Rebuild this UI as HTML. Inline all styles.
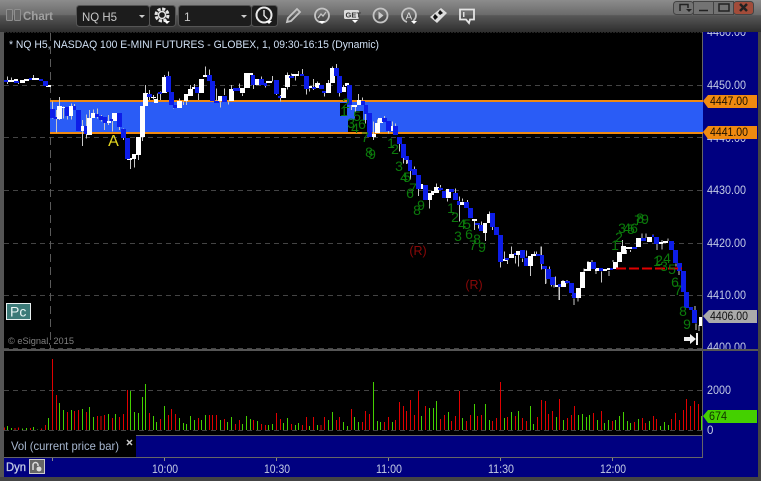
<!DOCTYPE html>
<html><head><meta charset="utf-8"><style>
html,body{margin:0;padding:0;background:#444;width:761px;height:481px;overflow:hidden}
svg{display:block;font-family:"Liberation Sans",sans-serif}
</style></head><body>
<svg width="761" height="481" viewBox="0 0 761 481" xmlns="http://www.w3.org/2000/svg">
<defs><linearGradient id="t" x1="0" y1="0" x2="0" y2="1"><stop offset="0" stop-color="#8c8c8c"/><stop offset=".47" stop-color="#6a6a6a"/><stop offset=".48" stop-color="#585858"/><stop offset="1" stop-color="#2e2e2e"/></linearGradient>
<clipPath id="c"><rect x="703" y="32" width="55" height="317"/></clipPath></defs>
<rect width="761" height="481" fill="#444"/>
<rect width="761" height="32" fill="url(#t)"/>
<rect x="0" y="32" width="4" height="449" fill="#555"/>
<rect x="758" y="32" width="3" height="449" fill="#444"/>
<!-- toolbar -->
<g fill="#666" stroke="#8e8e8e" stroke-width="1"><rect x="6.5" y="9.5" width="6" height="11" rx="1"/><rect x="14.5" y="9.5" width="6" height="11" rx="1"/></g>
<text x="23" y="20" font-size="11.500" font-weight="bold" fill="#a0a0a0" textLength="30" lengthAdjust="spacingAndGlyphs">Chart</text>
<rect x="76.5" y="5.5" width="73" height="21" rx="3" fill="#1c1c1c" stroke="#555"/>
<rect x="149.5" y="5.5" width="26" height="21" rx="3" fill="#1c1c1c" stroke="#555"/>
<text x="82" y="21" font-size="12" fill="#c8c8c8" textLength="35" lengthAdjust="spacingAndGlyphs">NQ H5</text>
<path d="M139 15h6l-3 3z" fill="#ccc"/>
<circle cx="162" cy="15" r="6" fill="none" stroke="#e4e4e4" stroke-width="3" stroke-dasharray="3.200 1.500"/><circle cx="162" cy="15" r="3.500" fill="none" stroke="#e4e4e4" stroke-width="1.500"/>
<path d="M164 21h6l-3 3z" fill="#fff"/>
<rect x="178.5" y="5.5" width="73" height="21" rx="3" fill="#1c1c1c" stroke="#555"/>
<rect x="251.5" y="5.5" width="26" height="21" rx="3" fill="#1c1c1c" stroke="#555"/>
<text x="184" y="21" font-size="12" fill="#c8c8c8">1</text>
<path d="M241 15h6l-3 3z" fill="#ccc"/>
<circle cx="264" cy="15" r="7.500" fill="none" stroke="#e8e8e8" stroke-width="2"/><path d="M264 10v5.500l3.500 3.500" fill="none" stroke="#e8e8e8" stroke-width="1.400"/>
<path d="M266 21h6l-3 3z" fill="#fff"/>
<g fill="none" stroke="#c4c4c4" stroke-width="1.800">
<path d="M287 22l1-4 9-9 3 3-9 9z"/>
<circle cx="322" cy="15.500" r="7"/><path d="M318 18l3-4 2 2 3-4" stroke-width="1.300"/>
<circle cx="380.500" cy="15.500" r="7"/>
<path d="M413 21a7 7 0 1 0-6 1"/>
<path d="M460 9.500h14v10h-4l-1 3.500-3-3.500h-6z" stroke="#e4e4e4"/>
</g>
<path d="M319 21h6l-3 3zM352 20h6l-3 3zM411 21h6l-3 3z" fill="#fff"/>
<rect x="344" y="10" width="15" height="9" rx="1.500" fill="#ddd"/>
<text x="345.500" y="17.500" font-size="7.500" font-weight="bold" fill="#333">GET</text>
<path d="M378.500 11.500v8l5-4z" fill="#ccc"/>
<text x="405.500" y="19.500" font-size="10" fill="#ddd">A</text>
<path d="M430 17l11-9 6 5-10 10z" fill="#ddd"/>
<path d="M435 14l3 3-3 3-2-3zM440 10l3 3-3 2-2-2z" fill="#111"/>
<rect x="463" y="12" width="1.500" height="5" fill="#ddd"/>
<!-- window buttons -->
<g fill="none" stroke="#444"><rect x="673.500" y="1.500" width="20" height="13" rx="3" fill="#737373"/><rect x="693.500" y="1.500" width="20" height="13" fill="#737373"/><rect x="713.500" y="1.500" width="20" height="13" fill="#737373"/><rect x="733.500" y="1.500" width="20" height="13" rx="3" fill="#a24c3a"/></g>
<path d="M680 11V4.500h8V8M699 10.500h9M719 4h10v7h-10z" fill="none" stroke="#222" stroke-width="1.500"/>
<path d="M686 9h6l-3 3z" fill="#222"/>
<path d="M740 4l7 7M747 4l-7 7" stroke="#222" stroke-width="2.500"/>
<!-- panels -->
<rect x="4" y="32" width="698" height="318" fill="#000"/>
<path d="M4 32.500h754" stroke="#222" stroke-dasharray="2 1"/>
<rect x="703" y="32" width="55" height="445" fill="#000080"/>
<rect x="702" y="32" width="1" height="425" fill="#666"/>
<rect x="4" y="351" width="698" height="84" fill="#000"/>
<rect x="4" y="435" width="132" height="22" fill="#000"/>
<rect x="136" y="435" width="566" height="22" fill="#000080"/>
<rect x="136" y="435" width="566" height="1" fill="#666"/>
<rect x="4" y="457" width="699" height="20" fill="#000080"/>
<rect x="4" y="457" width="699" height="1" fill="#666"/>
<rect x="0" y="477" width="761" height="4" fill="#444"/>
<!-- grid -->
<g stroke="#444" stroke-dasharray="5 4" shape-rendering="crispEdges">
<path d="M4 85.500h698M4 137.500h698M4 190.500h698M4 243.500h698M4 295.500h698M4 348.500h698M4 390.500h698M4 430.500h698"/>
</g>
<path d="M50.500 33V349" stroke="#5a5a5a" stroke-dasharray="8 5" shape-rendering="crispEdges"/>
<!-- band -->
<rect x="50" y="101" width="653" height="32" fill="#2a5cf6"/>
<rect x="50" y="100" width="653" height="2" fill="#f08a10"/>
<rect x="50" y="132" width="653" height="2" fill="#f08a10"/>
<path d="M340 103h7v13h-7zM355 111h8v9h-8zM348 120h19v12h-19z" fill="#000"/>
<!-- wicks -->
<g shape-rendering="crispEdges" stroke="#c8c8c8" stroke-width="3" fill="none">
<path transform="translate(0,60) scale(.3333)" d="M157 125V175M169 150V218M178 111V180M190 140V175M202 168V178M214 130V178M223 132V150M247 180V258M259 163V236M268 150V175M280 148V165M292 145V175M304 165V185M313 180V210M325 165V195M337 175V215M358 200V210M370 205V240M391 295V327M403 295V323M415 285V300M427 230V243M436 75V100M448 90V120M460 105V118M472 100V120M481 95V120M493 45V60M505 35V50M520 130V145M538 115V125M550 125V135M559 120V135M571 75V95M583 72V85M595 100V120M616 20V45M628 28V45M649 85V122M661 125V143M673 85V105M685 125V133M694 75V90M718 70V85M727 100V108M22 50V72M34 52V62M55 66V72M100 45V55"/>
<path transform="translate(250,60) scale(.3333)" d="M10 70V87M34 50V60M46 70V82M67 48V65M79 100V105M91 105V125M112 38V50M112 78V88M124 40V46M136 45V62M145 33V48M157 27V42M169 85V103M178 85V95M190 57V90M202 65V72M223 95V110M235 60V70M247 20V25M259 12V25M268 95V110M280 75V84M292 70V76M304 135V150M316 135V155M325 102V120M337 113V122M346 160V190M370 185V240M382 178V190M403 168V175M415 210V220M427 185V198M436 190V198M448 250V275M460 295V310M469 290V312M481 330V358M493 320V330"/>
<path transform="translate(360,130) scale(.3333)" d="M118 40V65M130 80V100M142 90V100M151 120V148M175 175V198M208 208V235M229 160V172M241 165V172M262 205V215M286 175V190M298 200V275M307 205V215M322 210V218M343 270V300M355 285V295M364 275V285M376 305V333M388 245V255M397 290V300M421 395V412M433 365V388M442 390V402M454 350V372M466 378V400M475 375V410M487 385V396M499 362V380M511 408V438M523 365V378M529 365V375M544 350V375M544 400V418M556 415V462M568 410V418M574 450V470M586 440V465M598 470V510"/>
<path transform="translate(540,200) scale(.3333)" d="M3 140V165M18 235V250M42 255V262M57 260V300M69 240V245M81 240V250M102 295V315M114 290V305M132 205V218M144 183V190M156 180V186M168 210V222M184 215V248M207 213V228M219 180V186M247 120V140M259 150V162M271 150V156M306 100V115M318 100V114M339 103V110M351 132V150M366 120V148M384 115V123M408 190V200M417 210V225M465 318V330M468 370V390M477 375V393"/>
</g>
<!-- white bodies -->
<path shape-rendering="crispEdges" fill="#fff" d="M8 80h6v2h-6zM14 79h4v2h-4zM20 80h5v3h-5zM24 79h5v2h-5zM32 78h7v2h-7zM46 85h5v2h-5zM57 106h5v13h-5zM62 107h3v1h-3zM69 106h4v10h-4zM80 126h4v5h-4zM87 118h5v17h-5zM91 113h4v5h-4zM106 121h5v2h-5zM112 113h5v8h-5zM127 158h5v2h-5zM132 154h4v5h-4zM136 137h5v18h-5zM140 106h5v31h-5zM143 93h5v13h-5zM151 97h5v1h-5zM154 99h4v4h-4zM162 77h5v16h-5zM177 101h5v7h-5zM184 94h4v7h-4zM188 89h5v7h-5zM192 87h4v2h-4zM199 79h5v14h-5zM203 75h5v2h-5zM218 96h4v5h-4zM229 89h5v12h-5zM240 88h5v5h-5zM244 73h6v15h-6zM250 73h3v2h-3zM255 79h5v6h-5zM266 81h6v2h-6zM281 88h5v10h-5zM285 75h5v12h-5zM292 74h7v2h-7zM307 86h5v2h-5zM315 83h5v5h-5zM326 83h5v10h-5zM330 68h5v15h-5zM341 87h5v5h-5zM345 83h4v3h-4zM352 105h5v2h-5zM357 100h4v5h-4zM371 134h5v3h-5zM375 123h5v10h-5zM378 118h5v5h-5zM390 126h4v5h-4zM418 184h5v5h-5zM427 193h5v7h-5zM431 191h3v4h-3zM434 187h5v6h-5zM446 189h5v9h-5zM460 202h4v3h-4zM472 219h5v2h-5zM483 223h4v10h-4zM487 214h3v9h-3zM502 259h5v2h-5zM509 254h5v4h-5zM516 251h4v4h-4zM528 256h5v10h-5zM531 254h5v2h-5zM555 285h4v2h-4zM561 281h5v6h-5zM576 288h5v10h-5zM580 272h5v16h-5zM584 269h4v2h-4zM587 262h4v9h-4zM595 268h5v3h-5zM603 269h4v2h-4zM607 268h4v2h-4zM613 262h5v7h-5zM617 252h5v10h-5zM621 246h5v8h-5zM625 247h7v2h-7zM636 238h5v9h-5zM647 237h5v5h-5zM658 242h5v2h-5zM663 241h5v2h-5zM699 317h3v9h-3z"/>
<!-- blue bodies -->
<path shape-rendering="crispEdges" fill="#0d1de8" d="M4 80h4v2h-4zM14 81h5v2h-5zM29 78h3v2h-3zM39 79h4v2h-4zM43 81h5v5h-5zM50 109h5v9h-5zM54 117h3v2h-3zM65 107h4v9h-4zM73 106h3v4h-3zM76 110h5v21h-5zM84 126h3v8h-3zM95 114h4v3h-4zM99 116h4v4h-4zM103 117h4v6h-4zM110 119h3v2h-3zM117 113h5v14h-5zM121 129h5v9h-5zM125 138h5v21h-5zM147 94h5v3h-5zM158 92h4v2h-4zM166 76h5v16h-5zM169 92h5v13h-5zM173 105h4v3h-4zM195 87h4v6h-4zM207 75h5v6h-5zM210 81h5v20h-5zM214 101h5v2h-5zM222 96h5v6h-5zM233 88h7v3h-7zM251 75h4v10h-4zM259 79h5v6h-5zM264 83h3v3h-3zM274 80h5v14h-5zM278 96h3v2h-3zM289 76h5v2h-5zM300 74h4v2h-4zM304 76h5v13h-5zM312 87h4v2h-4zM319 85h5v4h-5zM322 91h4v2h-4zM334 68h5v8h-5zM337 76h5v17h-5zM347 85h5v20h-5zM361 101h4v4h-4zM364 105h4v9h-4zM367 113h5v24h-5zM382 118h5v4h-5zM386 121h5v10h-5zM393 126h5v9h-5zM397 137h5v7h-5zM401 144h5v14h-5zM404 156h5v4h-5zM408 160h4v11h-4zM412 169h5v6h-5zM416 175h5v14h-5zM423 185h5v15h-5zM438 188h5v2h-5zM442 191h4v7h-4zM449 189h5v3h-5zM453 193h5v7h-5zM457 201h3v4h-3zM464 202h5v6h-5zM468 208h5v10h-5zM475 223h5v2h-5zM479 225h4v6h-4zM490 213h5v14h-5zM494 227h5v8h-5zM498 235h5v27h-5zM505 258h4v2h-4zM514 253h2v2h-2zM520 250h5v8h-5zM524 258h4v8h-4zM536 254h4v2h-4zM540 255h4v9h-4zM542 266h5v3h-5zM546 269h5v10h-5zM550 277h5v8h-5zM558 284h3v3h-3zM565 281h5v2h-5zM569 283h5v10h-5zM572 293h4v5h-4zM591 262h5v7h-5zM599 268h4v3h-4zM610 268h3v2h-3zM632 247h5v2h-5zM641 238h5v3h-5zM652 235h2v2h-2zM654 237h5v7h-5zM669 241h5v9h-5zM673 250h5v13h-5zM677 263h5v8h-5zM681 271h5v21h-5zM684 292h5v16h-5zM689 307h4v3h-4zM692 310h5v13h-5z"/>
<!-- red line -->
<path d="M616 268.500H682" stroke="#e00000" stroke-width="2" stroke-dasharray="10 3" shape-rendering="crispEdges"/>
<!-- digits -->
<g font-size="14" fill="#0b7a0b" text-anchor="middle" dominant-baseline="central">
<text x="346" y="103">2</text><text x="344" y="111">1</text><text x="351" y="123">3</text><text x="355" y="128">4</text><text x="357" y="116">5</text><text x="362" y="124">6</text><text x="365" y="137">7</text><text x="369" y="152">8</text><text x="372" y="154">9</text><text x="391" y="143">1</text><text x="395" y="149">2</text><text x="399" y="166">3</text><text x="404" y="177">4</text><text x="407" y="177">5</text>
<text x="410" y="193">6</text><text x="413" y="188">7</text><text x="417" y="210">8</text><text x="421" y="205">9</text><text x="451" y="208">1</text><text x="455" y="217">2</text><text x="462" y="224">4</text><text x="467" y="224">5</text><text x="458" y="236">3</text><text x="469" y="234">6</text><text x="473" y="245">7</text><text x="477" y="239">8</text><text x="482" y="247">9</text>
<text x="615" y="245">1</text><text x="619" y="237">2</text><text x="622" y="228">3</text><text x="627" y="228">4</text><text x="631" y="229">5</text><text x="634" y="228">6</text><text x="638" y="220">7</text><text x="640" y="218">8</text><text x="645" y="219">9</text>
<text x="657" y="261">1</text><text x="659" y="260">2</text><text x="664" y="266">3</text><text x="667" y="258">4</text><text x="672" y="269">5</text><text x="675" y="282">6</text><text x="678" y="290">7</text><text x="683" y="311">8</text><text x="687" y="324">9</text>
</g>
<g font-size="12.500" fill="#8a0808" text-anchor="middle" dominant-baseline="central"><text x="418" y="251">(R)</text><text x="474" y="285">(R)</text></g>
<text x="113.500" y="146" font-size="16" fill="#e6d820" text-anchor="middle">A</text>
<text x="9" y="48" font-size="11" fill="#d0e0f4" textLength="370" lengthAdjust="spacingAndGlyphs">* NQ H5, NASDAQ 100 E-MINI FUTURES - GLOBEX, 1, 09:30-16:15 (Dynamic)</text>
<!-- Pc -->
<rect x="6.500" y="303.500" width="24" height="16" fill="#3c7a78" stroke="#e8f0f0"/>
<text x="10" y="316.500" font-size="14" fill="#e8f4f4">Pc</text>
<text x="8" y="344" font-size="9.500" fill="#808080" textLength="66" lengthAdjust="spacingAndGlyphs">© eSignal, 2015</text>
<!-- go-to-end arrow -->
<path d="M684 337h6v-3l6 5-6 5v-3h-6z" fill="#eee"/><rect x="696" y="333" width="2" height="12" fill="#eee"/>
<!-- volume -->
<g shape-rendering="crispEdges" stroke-width="3.100" fill="none">
<path stroke="#e00000" transform="translate(0,350) scale(.3333)" d="M13 232V240M45 234V240M55 232V240M91 234V240M124 235V240M136 225V240M157 27V240M169 135V240M202 186V240M224 183V240M236 180V240M259 186V240M292 198V240M303 198V240M313 195V240M337 204V240M359 201V240M370 192V240M382 120V240M448 189V240M481 207V240M505 195V240M515 177V240M526 192V240M595 204V240M628 195V240M637 195V240M649 195V240M673 207V240M706 222V240M718 210V240"/>
<path stroke="#44d000" transform="translate(0,350) scale(.3333)" d="M22 228V240M34 234V240M67 236V240M79 234V240M100 231V240M113 238V240M145 204V240M179 159V240M190 180V240M214 180V240M247 177V240M268 171V240M280 201V240M325 192V240M347 192V240M391 123V240M403 186V240M415 189V240M427 141V240M436 102V240M460 198V240M469 216V240M493 168V240M538 204V240M550 219V240M559 222V240M571 198V240M583 210V240M604 210V240M616 195V240M661 210V240M682 216V240M694 201V240M727 222V240M739 198V240"/>
<path stroke="#e00000" transform="translate(250,350) scale(.3333)" d="M10 210V240M34 222V240M46 225V240M79 189V240M91 207V240M124 222V240M157 225V240M169 201V240M190 201V240M213 225V240M223 201V240M259 210V240M268 201V240M304 177V240M337 216V240M346 183V240M358 192V240M403 216V240M415 201V240M436 210V240M448 156V240M460 168V240M469 183V240M481 150V240M493 195V240M505 123V240M526 168V240M571 207V240M583 195V240M604 213V240M616 198V240M628 123V240M649 213V240M661 195V240M682 198V240M694 195V240M727 213V240M739 204V240M751 96V240M772 201V240"/>
<path stroke="#44d000" transform="translate(250,350) scale(.3333)" d="M1 207V240M22 213V240M56 225V240M68 222V240M100 219V240M112 204V240M136 225V240M145 219V240M178 228V240M202 225V240M235 210V240M247 186V240M280 216V240M292 228V240M313 201V240M325 216V240M370 96V240M382 213V240M391 216V240M427 216V240M514 198V240M538 174V240M550 174V240M559 153V240M595 186V240M637 204V240M673 162V240M706 162V240M718 210V240M763 204V240"/>
<path stroke="#e00000" transform="translate(510,350) scale(.3333)" d="M16 198V240M37 204V240M49 213V240M82 201V240M94 150V240M106 153V240M115 192V240M127 183V240M148 147V240M172 204V240M184 195V240M193 168V240M250 189V240M274 183V240M307 213V240M373 216V240M397 204V240M406 219V240M430 198V240M439 207V240M484 207V240M496 189V240M508 210V240M520 180V240M529 147V240M541 168V240M553 153V240M565 162V240"/>
<path stroke="#44d000" transform="translate(510,350) scale(.3333)" d="M4 186V240M25 183V240M61 168V240M70 222V240M139 201V240M160 210V240M205 195V240M217 192V240M229 201V240M238 195V240M262 210V240M283 219V240M295 210V240M316 210V240M328 198V240M340 186V240M352 213V240M361 219V240M385 207V240M418 213V240M451 228V240M463 216V240M475 225V240M574 198V240"/>
</g>
<text x="11" y="450" font-size="12" fill="#a8b8d0" textLength="108" lengthAdjust="spacingAndGlyphs">Vol (current price bar)</text>
<path d="M127 440l5 5M132 440l-5 5" stroke="#ccc" stroke-width="1.500"/>
<!-- axis -->
<g font-size="11.500" fill="#c4cce4" clip-path="url(#c)">
<text x="707" y="36" textLength="39" lengthAdjust="spacingAndGlyphs">4460.00</text><text x="707" y="89" textLength="39" lengthAdjust="spacingAndGlyphs">4450.00</text><text x="707" y="142" textLength="39" lengthAdjust="spacingAndGlyphs">4440.00</text><text x="707" y="194" textLength="39" lengthAdjust="spacingAndGlyphs">4430.00</text><text x="707" y="247" textLength="39" lengthAdjust="spacingAndGlyphs">4420.00</text><text x="707" y="299" textLength="39" lengthAdjust="spacingAndGlyphs">4410.00</text><text x="707" y="351" textLength="39" lengthAdjust="spacingAndGlyphs">4400.00</text>
</g>
<g font-size="11.500" fill="#c4cce4"><text x="707" y="394" textLength="24" lengthAdjust="spacingAndGlyphs">2000</text><text x="707" y="434">0</text></g>
<rect x="0" y="349" width="758" height="2" fill="#555"/>
<path d="M703 101l5-6h49v13h-49zM703 132l5-6h49v13h-49z" fill="#f08a10"/>
<g font-size="11.500" fill="#1a1000"><text x="710" y="105" textLength="38" lengthAdjust="spacingAndGlyphs">4447.00</text><text x="710" y="136" textLength="38" lengthAdjust="spacingAndGlyphs">4441.00</text></g>
<path d="M703 316l6-6h48v13h-48z" fill="#aaa"/>
<text x="710" y="320" font-size="11.500" fill="#111" textLength="38" lengthAdjust="spacingAndGlyphs">4406.00</text>
<path d="M703 416l5-6h49v13h-49z" fill="#44d000"/>
<text x="709" y="420" font-size="11.500" fill="#113300" textLength="18" lengthAdjust="spacingAndGlyphs">674</text>
<!-- time axis -->
<path d="M52.500 458v3M164.500 458v3M276.500 458v3M388.500 458v3M500.500 458v3M612.500 458v3" stroke="#888"/>
<g font-size="11.500" fill="#c4cce4"><text x="152" y="473" textLength="26" lengthAdjust="spacingAndGlyphs">10:00</text><text x="264" y="473" textLength="26" lengthAdjust="spacingAndGlyphs">10:30</text><text x="376" y="473" textLength="26" lengthAdjust="spacingAndGlyphs">11:00</text><text x="488" y="473" textLength="26" lengthAdjust="spacingAndGlyphs">11:30</text><text x="600" y="473" textLength="26" lengthAdjust="spacingAndGlyphs">12:00</text></g>
<text x="6" y="471" font-size="12" fill="#c4cce4" stroke="#c4cce4" stroke-width=".3" textLength="20" lengthAdjust="spacingAndGlyphs">Dyn</text>
<rect x="29.500" y="459.500" width="15" height="14" fill="#666" stroke="#ccc"/>
<path d="M33 470v-5a2.500 2.500 0 0 1 5 0v1" fill="none" stroke="#ddd" stroke-width="1.500"/><circle cx="39" cy="469" r="2.500" fill="#ddd"/>
</svg>
</body></html>
